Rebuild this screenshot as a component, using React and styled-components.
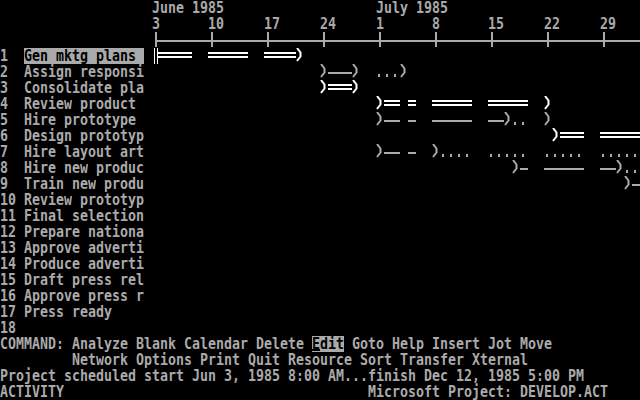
import styled, { createGlobalStyle } from 'styled-components';

const GREY = '#aaaaaa';
const WHITE = '#ffffff';
const COLS = 80;
const CHART_COL = 19;

const GlobalStyle = createGlobalStyle`
  html, body {
    margin: 0;
    padding: 0;
    background: #000;
  }
`;

const Screen = styled.div`
  width: 640px;
  height: 400px;
  background: #000;
  overflow: hidden;
  display: flex;
  flex-direction: column;
`;

const Row = styled.div`
  display: grid;
  grid-template-columns: repeat(${COLS}, 8px);
  height: 16px;
`;

const Cell = styled.span`
  position: relative;
  width: 8px;
  height: 16px;
  display: flex;
  align-items: center;
  justify-content: center;
  background: ${(p) => (p.$inv ? GREY : 'transparent')};
  color: ${(p) => (p.$inv ? '#000' : GREY)};
  font-family: "DejaVu Sans Mono", "Liberation Mono", monospace;
  font-weight: bold;
  font-size: 13.28px;
  white-space: pre;

  &::after {
    content: '';
    display: ${(p) => (p.$cursor ? 'block' : 'none')};
    position: absolute;
    left: 0;
    right: 0;
    top: 13px;
    height: 2px;
    background: #000;
  }
`;

// the CGA font is taller than DejaVu at an 8px advance
const Char = styled.span`
  display: inline-block;
  width: 8px;
  height: 13.33px;
  line-height: 13.33px;
  text-align: center;
  transform: scaleY(1.2);
`;

// one text-mode graphic character, drawn in its 8x16 cell
const Glyph = ({ kind, color }) => {
  let parts = null;
  switch (kind) {
    case '=':
      parts = (
        <>
          <rect x="0" y="4" width="8" height="2" />
          <rect x="0" y="8" width="8" height="2" />
        </>
      );
      break;
    case '-':
      parts = <rect x="0" y="8" width="8" height="2" />;
      break;
    case '.':
      parts = <rect x="2" y="10" width="2" height="3" />;
      break;
    case '>':
      parts = (
        <polyline
          points="1,0 4.5,4.5 4.5,8.5 1,13"
          fill="none"
          stroke={color}
          strokeWidth="2"
        />
      );
      break;
    case 'S':
      parts = (
        <>
          <rect x="2" y="0" width="1" height="16" />
          <rect x="5" y="0" width="1" height="16" />
          <rect x="6" y="4" width="2" height="2" />
          <rect x="6" y="8" width="2" height="2" />
        </>
      );
      break;
    case '[':
      parts = (
        <>
          <rect x="3" y="8" width="5" height="2" />
          <rect x="3" y="0" width="2" height="15" />
        </>
      );
      break;
    case '+':
      parts = (
        <>
          <rect x="0" y="8" width="8" height="2" />
          <rect x="3" y="0" width="2" height="15" />
        </>
      );
      break;
    case 'L':
      parts = <rect x="0" y="8" width="8" height="2" />;
      break;
    default:
      return null;
  }
  return (
    <svg width="8" height="16" viewBox="0 0 8 16" fill={color}>
      {parts}
    </svg>
  );
};

const blank = ' '.repeat(COLS);
const put = (line, col, str) =>
  (line.slice(0, col) + str + line.slice(col + str.length)).slice(0, COLS);

const tasks = [
  ['Gen mktg plans', 'S====  =====  ====>', WHITE],
  ['Assign responsibilities', ' '.repeat(21) + '>--->  ...>', GREY],
  ['Consolidate plans', ' '.repeat(21) + '>===>', WHITE],
  ['Review product', ' '.repeat(28) + '>== =  =====  =====  >', WHITE],
  ['Hire prototype', ' '.repeat(28) + '>-- -  -----  -->..  >', GREY],
  ['Design prototype', ' '.repeat(50) + '>===  =====', WHITE],
  ['Hire layout artist', ' '.repeat(28) + '>-- -  >....  .....  .....  .....', GREY],
  ['Hire new product', ' '.repeat(45) + '>-  -----  -->..', GREY],
  ['Train new product', ' '.repeat(59) + '>-', GREY],
  ['Review prototype'],
  ['Final selection'],
  ['Prepare national'],
  ['Approve advertising'],
  ['Produce advertising'],
  ['Draft press release'],
  ['Approve press release'],
  ['Press ready'],
  [''],
];

const axis = Array.from({ length: COLS - CHART_COL }, (_, i) =>
  i === 0 ? '[' : i % 7 === 0 ? '+' : 'L'
).join('');

const months = put(put(blank, 19, 'June 1985'), 47, 'July 1985');
let days = blank;
[
  [19, '3'], [26, '10'], [33, '17'], [40, '24'], [47, '1'],
  [54, '8'], [61, '15'], [68, '22'], [75, '29'],
].forEach(([c, d]) => {
  days = put(days, c, d);
});

const lines = [
  { text: months },
  { text: days },
  { text: blank, bar: axis, color: GREY },
  ...tasks.map(([name, bar, color], i) => ({
    text: put(put(blank, 0, String(i + 1)), 3, name.slice(0, 15)),
    bar,
    color,
    inv: i === 0 ? [3, 17] : null,
  })),
  {
    text: put(blank, 0, 'COMMAND: Analyze Blank Calendar Delete Edit Goto Help Insert Jot Move'),
    inv: [39, 42],
    cursor: 39,
  },
  { text: put(blank, 9, 'Network Options Print Quit Resource Sort Transfer Xternal') },
  { text: put(blank, 0, 'Project scheduled start Jun 3, 1985 8:00 AM...finish Dec 12, 1985 5:00 PM') },
  { text: put(put(blank, 0, 'ACTIVITY'), 46, 'Microsoft Project: DEVELOP.ACT') },
];

const ScreenRow = ({ text, bar, color, inv, cursor }) => (
  <Row>
    {Array.from(text).map((ch, col) => {
      const g = bar && col >= CHART_COL ? bar[col - CHART_COL] : undefined;
      if (g && g !== ' ') {
        return (
          <Cell key={col}>
            <Glyph kind={g} color={color} />
          </Cell>
        );
      }
      const isInv = inv && col >= inv[0] && col <= inv[1];
      return (
        <Cell key={col} $inv={isInv} $cursor={cursor === col}>
          <Char>{ch}</Char>
        </Cell>
      );
    })}
  </Row>
);

const App = () => (
  <>
    <GlobalStyle />
    <Screen>
      {lines.map((l, i) => (
        <ScreenRow key={i} {...l} />
      ))}
    </Screen>
  </>
);

export default App;
